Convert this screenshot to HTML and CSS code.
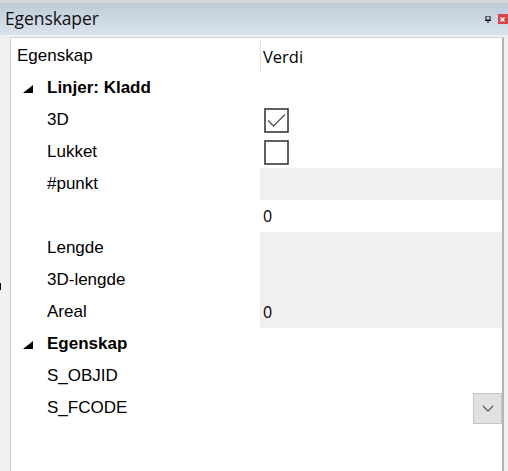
FILE: index.html
```html
<!DOCTYPE html>
<html>
<head>
<meta charset="utf-8">
<link rel="stylesheet" href="styles.css">
</head>
<body>
<div class="window">
  <div class="topstrip"></div>
  <div class="titlebar">
    <span class="title">Egenskaper</span>
    <div class="tools">
      <svg class="pin" width="6" height="7" viewBox="0 0 6 7"><rect x="1" y="0" width="4" height="4" fill="none" stroke="#111" stroke-width="1"/><line x1="0" y1="4.5" x2="6" y2="4.5" stroke="#111"/><line x1="3" y1="4.5" x2="3" y2="7" stroke="#111"/></svg>
      <div class="close"><svg width="9" height="9" viewBox="0 0 9 9"><path d="M2.5 2.5 L6.5 6.5 M6.5 2.5 L2.5 6.5" stroke="#fff" stroke-width="1.3"/></svg></div>
    </div>
  </div>
  <div class="content">
    <div class="panel">
      <div class="row header">
        <div class="name">Egenskap</div>
        <div class="value head-val">Verdi</div>
      </div>
      <div class="row group">
        <div class="name"><svg class="tri" width="10" height="8" viewBox="0 0 10 8"><polygon points="10,0 10,8 0,8" fill="#000"/></svg>Linjer: Kladd</div>
        <div class="value"></div>
      </div>
      <div class="row">
        <div class="name sub">3D</div>
        <div class="value"><svg class="cb" width="25" height="25" viewBox="0 0 25 25"><rect x="1" y="1" width="23" height="23" fill="#fff" stroke="#3a3a3a" stroke-width="1.6"/><path d="M4 12.5 L9.5 18 L21 6.5" fill="none" stroke="#555" stroke-width="1.3"/></svg></div>
      </div>
      <div class="row">
        <div class="name sub">Lukket</div>
        <div class="value"><svg class="cb" width="25" height="25" viewBox="0 0 25 25"><rect x="1" y="1" width="23" height="23" fill="#fff" stroke="#3a3a3a" stroke-width="1.6"/></svg></div>
      </div>
      <div class="row">
        <div class="name sub">#punkt</div>
        <div class="value ro"></div>
      </div>
      <div class="row">
        <div class="name sub"></div>
        <div class="value num">0</div>
      </div>
      <div class="row">
        <div class="name sub">Lengde</div>
        <div class="value ro"></div>
      </div>
      <div class="row">
        <div class="name sub">3D-lengde</div>
        <div class="value ro"></div>
      </div>
      <div class="row">
        <div class="name sub">Areal</div>
        <div class="value ro num">0</div>
      </div>
      <div class="row group">
        <div class="name"><svg class="tri" width="10" height="8" viewBox="0 0 10 8"><polygon points="10,0 10,8 0,8" fill="#000"/></svg>Egenskap</div>
        <div class="value"></div>
      </div>
      <div class="row">
        <div class="name sub">S_OBJID</div>
        <div class="value"></div>
      </div>
      <div class="row">
        <div class="name sub">S_FCODE</div>
        <div class="value drop"><div class="dropbtn"><svg width="12" height="7" viewBox="0 0 12 7"><path d="M1 1 L6 6 L11 1" fill="none" stroke="#555" stroke-width="1.2"/></svg></div></div>
      </div>
    </div>
  </div>
  <div class="artifact"></div>
</div>
</body>
</html>
```

FILE: styles.css
```css
html, body {
  margin: 0;
  padding: 0;
}
body {
  width: 508px;
  height: 471px;
  overflow: hidden;
  background: #f0f0f0;
  font-family: "Liberation Sans", Arial, sans-serif;
  color: #000;
}
.window {
  position: relative;
  width: 508px;
  height: 471px;
  display: flex;
  flex-direction: column;
}
.topstrip {
  height: 3px;
  background: #d6d6d6;
}
.titlebar {
  height: 32px;
  background: linear-gradient(#bfcbd8, #d9e3ee);
  display: flex;
  align-items: center;
  justify-content: space-between;
  padding-left: 5px;
}
.title {
  font-family: "Open Sans", "Noto Sans", sans-serif;
  font-size: 17.5px;
  color: #111;
  line-height: 32px;
  letter-spacing: -0.1px;
  position: relative;
  top: -1px;
}
.tools {
  display: flex;
  align-items: center;
  gap: 7px;
}
.pin {
  display: block;
}
.close {
  width: 10px;
  height: 10px;
  background: #d24848;
  display: flex;
  align-items: center;
  justify-content: flex-start;
}
.content {
  flex: 1;
  padding: 2px 4px 0 10px;
  overflow: hidden;
}
.panel {
  background: #fff;
  border-left: 1px solid #d4d4d4;
  border-top: 1px solid #d4d4d4;
  border-right: 2px solid #b4b4b4;
  height: 100%;
  padding-top: 2px;
  box-sizing: border-box;
}
.row {
  display: grid;
  grid-template-columns: 249px 1fr;
  height: 32px;
}
.name {
  display: flex;
  align-items: center;
  font-size: 17px;
  padding-left: 6px;
}
.name.sub {
  padding-left: 36px;
}
.group .name {
  font-weight: bold;
  padding-left: 12px;
}
.tri {
  margin-right: 14px;
  position: relative;
  top: 1px;
}
.value {
  display: flex;
  align-items: center;
  padding-left: 3px;
  font-family: "Open Sans", "Noto Sans", sans-serif;
  font-size: 16px;
}
.header .value {
  border-left: 1px solid #e2e2e2;
  padding-left: 2px;
}
.head-val {
  font-size: 16.5px;
}
.ro {
  background: #f0f0f0;
}
.cb {
  display: block;
  margin-left: 1px;
}
.drop {
  justify-content: flex-end;
  padding-right: 0;
}
.dropbtn {
  width: 27px;
  height: 29px;
  background: #e1e1e1;
  border: 1px solid #c4c4c4;
  display: flex;
  align-items: center;
  justify-content: center;
}
.artifact {
  position: absolute;
  left: 0;
  top: 283px;
  width: 1px;
  height: 7px;
  background: #000;
}
```
